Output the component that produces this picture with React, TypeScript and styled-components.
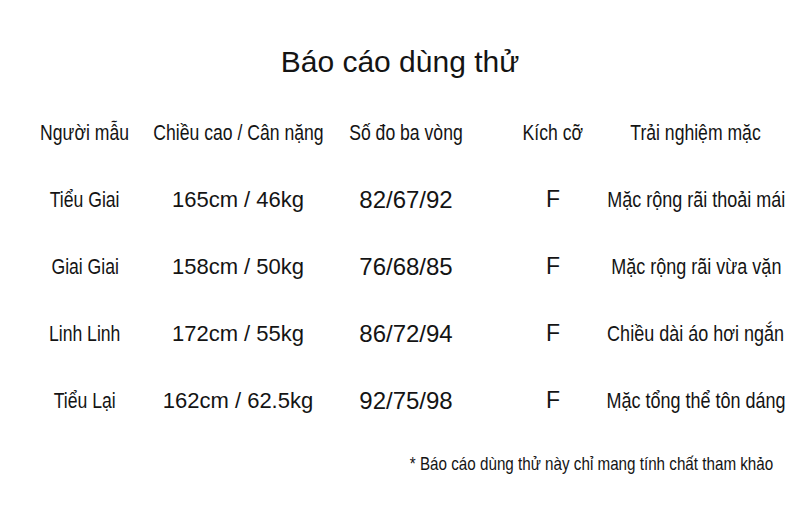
import React from 'react';
import styled, { createGlobalStyle } from 'styled-components';

const GlobalStyle = createGlobalStyle`
  html, body {
    margin: 0;
    padding: 0;
    background: #ffffff;
  }
`;

const sans = `"Liberation Sans", Arial, sans-serif`;

const Page = styled.div`
  width: 800px;
  height: 520px;
  padding-top: 42px;
  box-sizing: border-box;
  color: #141414;
  background: #ffffff;
  font-family: ${sans};
`;

const Title = styled.h1`
  margin: 0;
  height: 40px;
  line-height: 40px;
  text-align: center;
  font-weight: 400;
  font-size: 30px;
`;

const Table = styled.div`
  margin-top: 17px;
  display: grid;
  grid-template-columns: 170px 136px 200px 94px 192px;
  grid-auto-rows: 67px;
`;

const Cell = styled.div<{ $size?: number }>`
  display: flex;
  align-items: center;
  justify-content: center;
  white-space: nowrap;
  font-size: ${(p) => p.$size ?? 22}px;
`;

/* condensed lettering: the source uses a narrow face, none is installed */
const Narrow = styled.span<{ $origin?: string }>`
  display: inline-block;
  white-space: nowrap;
  transform: scaleX(0.8);
  transform-origin: ${(p) => p.$origin ?? 'center'};
`;

const Note = styled.p`
  margin: 20px 0 0;
  padding-right: 27px;
  line-height: 20px;
  text-align: right;
  font-size: 19px;
`;

const headers = ['Người mẫu', 'Chiều cao / Cân nặng', 'Số đo ba vòng', 'Kích cỡ', 'Trải nghiệm mặc'];

const rows = [
  ['Tiểu Giai', '165cm / 46kg', '82/67/92', 'F', 'Mặc rộng rãi thoải mái'],
  ['Giai Giai', '158cm / 50kg', '76/68/85', 'F', 'Mặc rộng rãi vừa vặn'],
  ['Linh Linh', '172cm / 55kg', '86/72/94', 'F', 'Chiều dài áo hơi ngắn'],
  ['Tiểu Lại', '162cm / 62.5kg', '92/75/98', 'F', 'Mặc tổng thể tôn dáng'],
];

const App: React.FC = () => {
  return (
    <Page>
      <GlobalStyle />
      <Title>Báo cáo dùng thử</Title>
      <Table>
        {headers.map((h) => (
          <Cell key={h}>
            <Narrow>{h}</Narrow>
          </Cell>
        ))}
        {rows.map((r) => (
          <React.Fragment key={r[0]}>
            <Cell>
              <Narrow>{r[0]}</Narrow>
            </Cell>
            <Cell>{r[1]}</Cell>
            <Cell $size={24}>{r[2]}</Cell>
            <Cell $size={23}>{r[3]}</Cell>
            <Cell $size={22.5}>
              <Narrow>{r[4]}</Narrow>
            </Cell>
          </React.Fragment>
        ))}
      </Table>
      <Note>
        <Narrow $origin="right">* Báo cáo dùng thử này chỉ mang tính chất tham khảo</Narrow>
      </Note>
    </Page>
  );
};

export default App;
